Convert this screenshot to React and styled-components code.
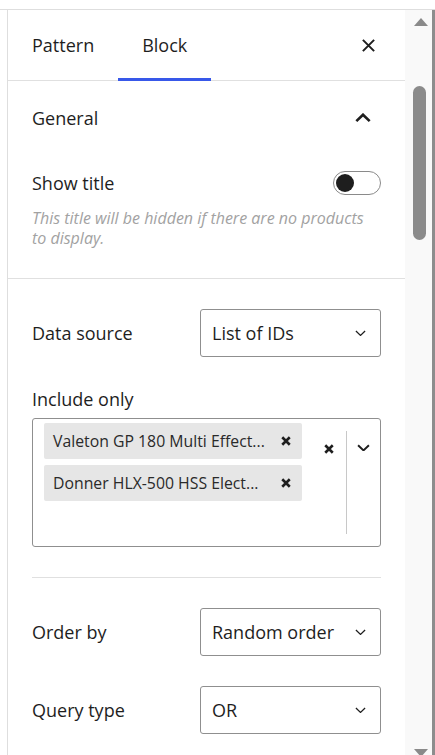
import React, { useState } from 'react';
import styled, { createGlobalStyle } from 'styled-components';

const GlobalStyle = createGlobalStyle`
  html, body {
    margin: 0;
    padding: 0;
    background: #fff;
  }
  body {
    font-family: 'Open Sans', 'Noto Sans', sans-serif;
    color: #1e1e1e;
  }
`;

const Page = styled.div`
  height: 755px;
  display: flex;
  flex-direction: column;
  overflow: hidden;
`;

const TopGap = styled.div`
  height: 9px;
  flex: none;
`;

const Frame = styled.div`
  flex: 1;
  display: flex;
  border-top: 1px solid #dedede;
  min-height: 0;
`;

const Gutter = styled.div`
  width: 7px;
  flex: none;
`;

const Panel = styled.div`
  flex: 1;
  border-left: 1px solid #dedede;
  display: flex;
  flex-direction: column;
  min-width: 0;
`;

const TabBar = styled.div`
  height: 70px;
  display: flex;
  align-items: stretch;
  border-bottom: 1px solid #e0e0e0;
  flex: none;
`;

const Tab = styled.button`
  position: relative;
  border: 0;
  background: none;
  padding: 0 24px;
  font: inherit;
  font-size: 18px;
  color: #1e1e1e;
  cursor: pointer;
  display: flex;
  align-items: center;

  &::after {
    content: '';
    position: absolute;
    left: 0;
    right: 0;
    bottom: -1px;
    height: 3px;
    background: ${p => (p.active ? '#3858e9' : 'transparent')};
  }
`;

const TabSpacer = styled.div`
  flex: 1;
`;

const IconButton = styled.button`
  border: 0;
  background: none;
  padding: 0;
  width: ${p => p.size || 36}px;
  height: ${p => p.size || 36}px;
  display: flex;
  align-items: center;
  justify-content: center;
  color: #1e1e1e;
  cursor: pointer;
  flex: none;
`;

const CloseWrap = styled.div`
  display: flex;
  align-items: center;
  padding-right: 25px;
`;

const Section = styled.section`
  padding: ${p => p.pad || '0 24px 30px'};
  border-bottom: ${p => (p.bordered ? '1px solid #e0e0e0' : '0')};
  flex: none;
`;

const SectionTitle = styled.div`
  height: 74px;
  display: flex;
  align-items: center;
  justify-content: space-between;
  font-size: 18px;
`;

const ToggleRow = styled.div`
  margin-top: 16px;
  height: 24px;
  display: flex;
  align-items: center;
  justify-content: space-between;
  font-size: 18px;
`;

const Toggle = styled.button`
  width: 48px;
  height: 24px;
  border-radius: 12px;
  border: 1px solid #8a8a8a;
  background: #fff;
  padding: 0 2px;
  display: flex;
  align-items: center;
  justify-content: ${p => (p.on ? 'flex-end' : 'flex-start')};
  cursor: pointer;
  box-sizing: border-box;

  &::before {
    content: '';
    width: 18px;
    height: 18px;
    border-radius: 50%;
    background: #1e1e1e;
  }
`;

const Help = styled.p`
  margin: 13px 0 0;
  font-size: 16px;
  line-height: 20px;
  font-style: italic;
  color: #a2a2a2;
`;

const FieldRow = styled.div`
  display: flex;
  align-items: center;
  justify-content: space-between;
  margin-top: ${p => p.gap || 0}px;
  font-size: 18px;
`;

const Select = styled.div`
  width: 181px;
  height: 48px;
  box-sizing: border-box;
  border: 1px solid #8f8f8f;
  border-radius: 3px;
  display: flex;
  align-items: center;
  justify-content: space-between;
  padding: 0 14px 0 11px;
  font-size: 18px;
  white-space: nowrap;
`;

const Label = styled.div`
  margin-top: 30px;
  height: 24px;
  display: flex;
  align-items: center;
  font-size: 18px;
`;

const MultiBox = styled.div`
  margin-top: 7px;
  height: 129px;
  box-sizing: border-box;
  border: 1px solid #8f8f8f;
  border-radius: 3px;
  display: flex;
  padding: 4px 0 4px 11px;
`;

const Chips = styled.div`
  flex: 1;
  display: flex;
  flex-direction: column;
  gap: 6px;
  align-items: flex-start;
`;

const Chip = styled.div`
  width: 258px;
  height: 36px;
  box-sizing: border-box;
  background: #e6e6e6;
  border-radius: 2px;
  display: flex;
  align-items: center;
  justify-content: space-between;
  padding: 0 11px 0 9px;
  font-size: 15.8px;
  color: #2a2a2a;
  white-space: nowrap;
`;

const Controls = styled.div`
  display: flex;
  align-items: stretch;
  padding: 8px 0;
`;

const Separator = styled.div`
  width: 1px;
  background: #c8c8c8;
`;

const Divider = styled.hr`
  border: 0;
  border-top: 1px solid #e0e0e0;
  margin: 30px 0 0;
`;

const ScrollTrack = styled.div`
  width: 27px;
  flex: none;
  background: #f9f9f9;
  display: flex;
  flex-direction: column;
  align-items: center;
`;

const Arrow = styled.div`
  width: 0;
  height: 0;
  margin-left: 4px;
  border-left: 7.5px solid transparent;
  border-right: 7.5px solid transparent;
  ${p =>
    p.down
      ? 'border-top: 8px solid #8a8a8a; margin-bottom: -2px;'
      : 'border-bottom: 8px solid #8a8a8a; margin-top: 8px;'}
`;

const Thumb = styled.div`
  width: 13px;
  height: 154px;
  margin-top: 60px;
  margin-left: 2px;
  border-radius: 7px;
  background: #8b8b8b;
`;

const TrackFill = styled.div`
  flex: 1;
`;

const Edge = styled.div`
  width: 3px;
  flex: none;
  background: #8d8d8d;
`;

const Cross = ({ size = 15, stroke = 2 }) => (
  <svg width={size} height={size} viewBox="0 0 16 16" fill="none">
    <path d="M2 2 L14 14 M14 2 L2 14" stroke="#1e1e1e" strokeWidth={stroke * (16 / size)} />
  </svg>
);

const Chevron = ({ up, w = 11, sw = 1.5 }) => (
  <svg width={w} height={w * 0.6} viewBox="0 0 12 7" fill="none">
    <path
      d={up ? 'M1 6 L6 1.2 L11 6' : 'M1 1 L6 5.8 L11 1'}
      stroke="#1e1e1e"
      strokeWidth={sw}
      strokeLinejoin="miter"
    />
  </svg>
);

const SelectField = ({ value }) => (
  <Select>
    <span>{value}</span>
    <Chevron w={11} sw={1.4} />
  </Select>
);

export default function App() {
  const [tab, setTab] = useState('block');
  const [showTitle, setShowTitle] = useState(false);

  const products = ['Valeton GP 180 Multi Effect...', 'Donner HLX-500 HSS Elect...'];

  return (
    <Page>
      <GlobalStyle />
      <TopGap />
      <Frame>
        <Gutter />
        <Panel>
          <TabBar>
            <Tab active={tab === 'pattern'} onClick={() => setTab('pattern')}>Pattern</Tab>
            <Tab active={tab === 'block'} onClick={() => setTab('block')}>Block</Tab>
            <TabSpacer />
            <CloseWrap>
              <IconButton size={24} aria-label="Close">
                <Cross size={15} stroke={2} />
              </IconButton>
            </CloseWrap>
          </TabBar>

          <Section bordered>
            <SectionTitle>
              <span>General</span>
              <IconButton size={24} style={{ marginRight: 6 }}>
                <Chevron up w={16} sw={2} />
              </IconButton>
            </SectionTitle>
            <ToggleRow>
              <span>Show title</span>
              <Toggle on={showTitle} onClick={() => setShowTitle(!showTitle)} />
            </ToggleRow>
            <Help>This title will be hidden if there are no products to display.</Help>
          </Section>

          <Section pad="30px 24px 0">
            <FieldRow>
              <span>Data source</span>
              <SelectField value="List of IDs" />
            </FieldRow>
            <Label>Include only</Label>
            <MultiBox>
              <Chips>
                {products.map(p => (
                  <Chip key={p}>
                    <span>{p}</span>
                    <Cross size={10} stroke={2.6} />
                  </Chip>
                ))}
              </Chips>
              <Controls>
                <IconButton size={35}>
                  <Cross size={10} stroke={2.6} />
                </IconButton>
                <Separator />
                <IconButton size={33}>
                  <Chevron w={13} sw={1.8} />
                </IconButton>
              </Controls>
            </MultiBox>
            <Divider />
            <FieldRow gap={30}>
              <span>Order by</span>
              <SelectField value="Random order" />
            </FieldRow>
            <FieldRow gap={30}>
              <span>Query type</span>
              <SelectField value="OR" />
            </FieldRow>
          </Section>
        </Panel>
        <ScrollTrack>
          <Arrow />
          <Thumb />
          <TrackFill />
          <Arrow down />
        </ScrollTrack>
        <Edge />
      </Frame>
    </Page>
  );
}
